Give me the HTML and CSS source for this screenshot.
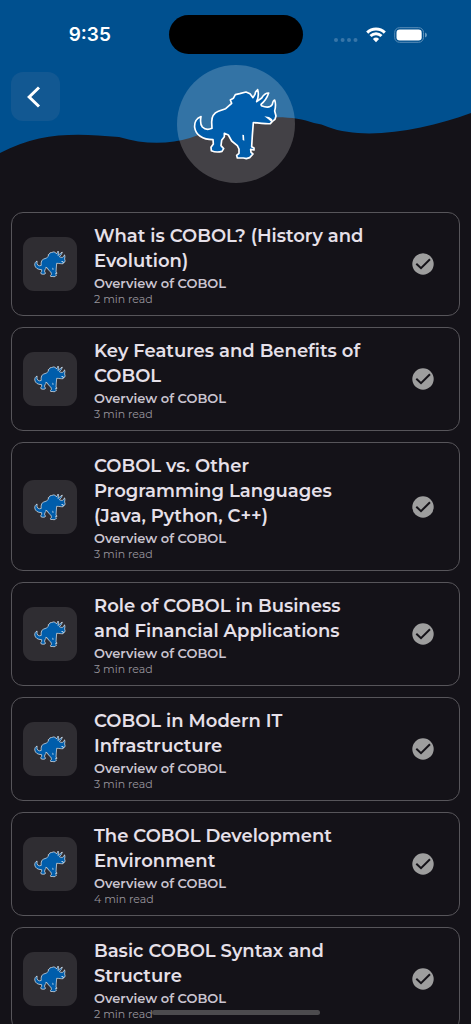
FILE: index.html
```html
<!DOCTYPE html>
<html lang="en">
<head>
<meta charset="utf-8">
<meta name="viewport" content="width=device-width, initial-scale=1">
<title>Overview of COBOL</title>
<link rel="stylesheet" href="styles.css">
</head>
<body>
<svg class="defs" aria-hidden="true">
  <symbol id="bull" viewBox="70 85 255 225">
    <path class="bull-body" d="M94 174C80 178 74 192 75 206C78 228 98 243 130 243L131 256L124 266L125 276Q140 283 157 278L162 270L154 261L156 245L164 234L164 224L176 229L186 247L203 261L208 271L208 284L201 290L203 298L221 298L230 300L240 297L250 286L244 281L243 272L253 274L253 268L246 264L248 230L251 192C270 192 290 197 302 195L308 188L316 182L319 172L315 157Q320 138 315 124Q310 125 308 137Q300 151 275 141L274 137Q290 124 297 103Q285 103 276 118L261 129Q269 110 264 93Q257 97 256 107L250 117L241 105L229 100L210 105L197 108L191 119L182 124L186 134L168 150L146 158Q126 166 126 190L127 209Q110 217 98 205Q90 195 94 174Z"/>
    <path class="bull-mark" d="M284 173L298 175L308 182L306 191L296 182ZM218 228L223 229L224 246L219 244Z"/>
  </symbol>
  <symbol id="check" viewBox="0 0 22 22">
    <circle class="check-disc" cx="11" cy="11" r="10.7"/>
    <path class="check-tick" d="M4.3 10.7L9 15.2L18 6.2"/>
  </symbol>
</svg>

<div class="app">
  <header class="header">
    <svg class="wave" viewBox="0 0 471 153" preserveAspectRatio="none" aria-hidden="true">
      <path d="M0 0H471V113C425 130 365 141 328 127Q322 124 314 123C300 118 283 116 262 118C230 121 205 133 190 138C170 144 145 145 119 137C75 133 40 132 0 153Z"/>
    </svg>
    <div class="status">
      <span class="time">9:35</span>
      <span class="island"></span>
      <span class="signals">
        <svg class="dots" viewBox="0 0 24 18" aria-hidden="true"><circle cx="2" cy="14" r="2"/><circle cx="8.6" cy="14" r="2"/><circle cx="15" cy="14" r="2"/><circle cx="21.5" cy="14" r="2"/></svg>
        <svg class="wifi" viewBox="0 0 20 16" aria-hidden="true"><path d="M1.2 5.6C6 .9 14 .9 18.800 5.600M4.500 9C7.700 6 12.300 6 15.500 9"/><path class="wifi-tip" d="M6.900 12Q10 9.200 13.100 12L10 15.300Z"/></svg>
        <svg class="battery" viewBox="0 0 33 16" aria-hidden="true"><rect class="battery-shell" x=".7" y=".7" width="28.800" height="14.600" rx="4.800"/><rect x="2.500" y="2.500" width="25.200" height="11" rx="3.200"/><path class="battery-cap" d="M31 5.500Q33 6.300 33 8T31 10.500Z"/></svg>
      </span>
    </div>
    <div class="hero">
      <button class="back" type="button" aria-label="Back">
        <svg viewBox="0 0 14 22" aria-hidden="true"><path d="M12 1.500L2.200 11L12 20.500"/></svg>
      </button>
      <div class="badge"><svg aria-hidden="true"><use href="#bull"/></svg></div>
    </div>
  </header>

  <main class="list">
    <a class="card" href="#history">
      <span class="thumb"><svg aria-hidden="true"><use href="#bull"/></svg></span>
      <span class="text"><strong class="title">What is COBOL? (History and<br>Evolution)</strong><span class="topic">Overview of COBOL</span><span class="length">2 min read</span></span>
      <svg class="check" role="img" aria-label="Completed"><use href="#check"/></svg>
    </a>
    <a class="card" href="#features">
      <span class="thumb"><svg aria-hidden="true"><use href="#bull"/></svg></span>
      <span class="text"><strong class="title">Key Features and Benefits of<br>COBOL</strong><span class="topic">Overview of COBOL</span><span class="length">3 min read</span></span>
      <svg class="check" role="img" aria-label="Completed"><use href="#check"/></svg>
    </a>
    <a class="card" href="#comparison">
      <span class="thumb"><svg aria-hidden="true"><use href="#bull"/></svg></span>
      <span class="text"><strong class="title">COBOL vs. Other<br>Programming Languages<br>(Java, Python, C++)</strong><span class="topic">Overview of COBOL</span><span class="length">3 min read</span></span>
      <svg class="check" role="img" aria-label="Completed"><use href="#check"/></svg>
    </a>
    <a class="card" href="#business">
      <span class="thumb"><svg aria-hidden="true"><use href="#bull"/></svg></span>
      <span class="text"><strong class="title">Role of COBOL in Business<br>and Financial Applications</strong><span class="topic">Overview of COBOL</span><span class="length">3 min read</span></span>
      <svg class="check" role="img" aria-label="Completed"><use href="#check"/></svg>
    </a>
    <a class="card" href="#infrastructure">
      <span class="thumb"><svg aria-hidden="true"><use href="#bull"/></svg></span>
      <span class="text"><strong class="title">COBOL in Modern IT<br>Infrastructure</strong><span class="topic">Overview of COBOL</span><span class="length">3 min read</span></span>
      <svg class="check" role="img" aria-label="Completed"><use href="#check"/></svg>
    </a>
    <a class="card" href="#environment">
      <span class="thumb"><svg aria-hidden="true"><use href="#bull"/></svg></span>
      <span class="text"><strong class="title">The COBOL Development<br>Environment</strong><span class="topic">Overview of COBOL</span><span class="length">4 min read</span></span>
      <svg class="check" role="img" aria-label="Completed"><use href="#check"/></svg>
    </a>
    <a class="card" href="#syntax">
      <span class="thumb"><svg aria-hidden="true"><use href="#bull"/></svg></span>
      <span class="text"><strong class="title">Basic COBOL Syntax and<br>Structure</strong><span class="topic">Overview of COBOL</span><span class="length">2 min read</span></span>
      <svg class="check" role="img" aria-label="Completed"><use href="#check"/></svg>
    </a>
  </main>
  <div class="home-indicator"></div>
</div>
</body>
</html>
```

FILE: styles.css
```css
* {
  box-sizing: border-box;
}

body {
  margin: 0;
  background: #141218;
  color: #e6e0e9;
  font-family: Montserrat, Inter, "Liberation Sans", sans-serif;
}

.defs {
  position: absolute;
  width: 0;
  height: 0;
}

.bull-body {
  fill: #005dab;
  stroke: #fff;
  stroke-width: 5px;
  stroke-linejoin: round;
}

.bull-mark {
  fill: #fff;
}

.check-disc {
  fill: #9e9e9e;
}

.check-tick {
  fill: none;
  stroke: #141218;
  stroke-width: 2px;
}

.app {
  display: flex;
  flex-direction: column;
  height: 100vh;
  overflow: hidden;
}

.header {
  position: relative;
  flex: none;
  padding: 15px 0 29px;
}

.wave {
  position: absolute;
  top: 0;
  left: 0;
  width: 100%;
  height: 153px;
  fill: #00508f;
}

.status,
.hero {
  position: relative;
  display: grid;
  grid-template-columns: 1fr auto 1fr;
}

.status {
  align-items: center;
}

.time {
  padding-left: 11px;
  color: #fff;
  font-family: Inter, sans-serif;
  font-size: 19px;
  font-weight: 600;
  text-align: center;
}

.island {
  width: 134px;
  height: 39px;
  border-radius: 20px;
  background: #000;
}

.signals {
  display: flex;
  justify-content: center;
  align-items: center;
  gap: 8px;
  padding-right: 12px;
  fill: #fff;
}

.dots {
  width: 24px;
  height: 18px;
  fill: #3775a8;
}

.wifi {
  width: 20px;
  height: 16px;
  stroke: #fff;
  stroke-width: 3px;
}

.wifi path {
  fill: none;
}

.wifi .wifi-tip {
  fill: #fff;
  stroke: none;
}

.battery {
  width: 33px;
  height: 16px;
}

.battery-shell {
  fill: none;
  stroke: #598db7;
}

.battery-cap {
  fill: #669abf;
}

.hero {
  padding-top: 11px;
}

.back {
  display: grid;
  place-items: center;
  width: 49px;
  height: 49px;
  margin: 7px 0 0 11px;
  padding: 0 4px 0 0;
  border: 0;
  border-radius: 12px;
  background: #125892;
}

.back svg {
  width: 14px;
  height: 22px;
  fill: none;
  stroke: #fff;
  stroke-width: 3px;
}

.badge {
  display: grid;
  place-items: center;
  width: 118px;
  height: 118px;
  border-radius: 50%;
  background: rgba(255, 255, 255, 0.2);
}

.badge svg {
  width: 85px;
  height: 75px;
}

.list {
  display: flex;
  flex: 1;
  flex-direction: column;
  gap: 11px;
  min-height: 0;
  padding: 0 11px;
  overflow-y: auto;
  scrollbar-width: none;
}

.card {
  display: flex;
  flex: none;
  align-items: center;
  gap: 17px;
  padding: 0 25px 0 11px;
  border: 1px solid #57555a;
  border-radius: 12px;
  color: inherit;
  text-decoration: none;
}

.thumb {
  display: grid;
  flex: none;
  place-items: center;
  width: 54px;
  height: 54px;
  border-radius: 11px;
  background: #2f2d32;
}

.thumb svg {
  width: 32px;
  height: 28px;
}

.text {
  display: flex;
  flex: 1;
  flex-direction: column;
  min-width: 0;
  padding: 11px 0 8px;
}

.title {
  font-size: 18px;
  font-weight: 600;
  line-height: 25px;
}

.topic {
  color: #cac4d0;
  font-size: 13px;
  font-weight: 600;
  line-height: 18px;
}

.length {
  color: #98959c;
  font-size: 11px;
  line-height: 15px;
}

.check {
  flex: none;
  width: 22px;
  height: 22px;
}

.home-indicator {
  position: fixed;
  bottom: 9px;
  left: 50%;
  width: 168px;
  height: 5px;
  border-radius: 3px;
  background: #4c4b4e;
  transform: translateX(-50%);
}
```
